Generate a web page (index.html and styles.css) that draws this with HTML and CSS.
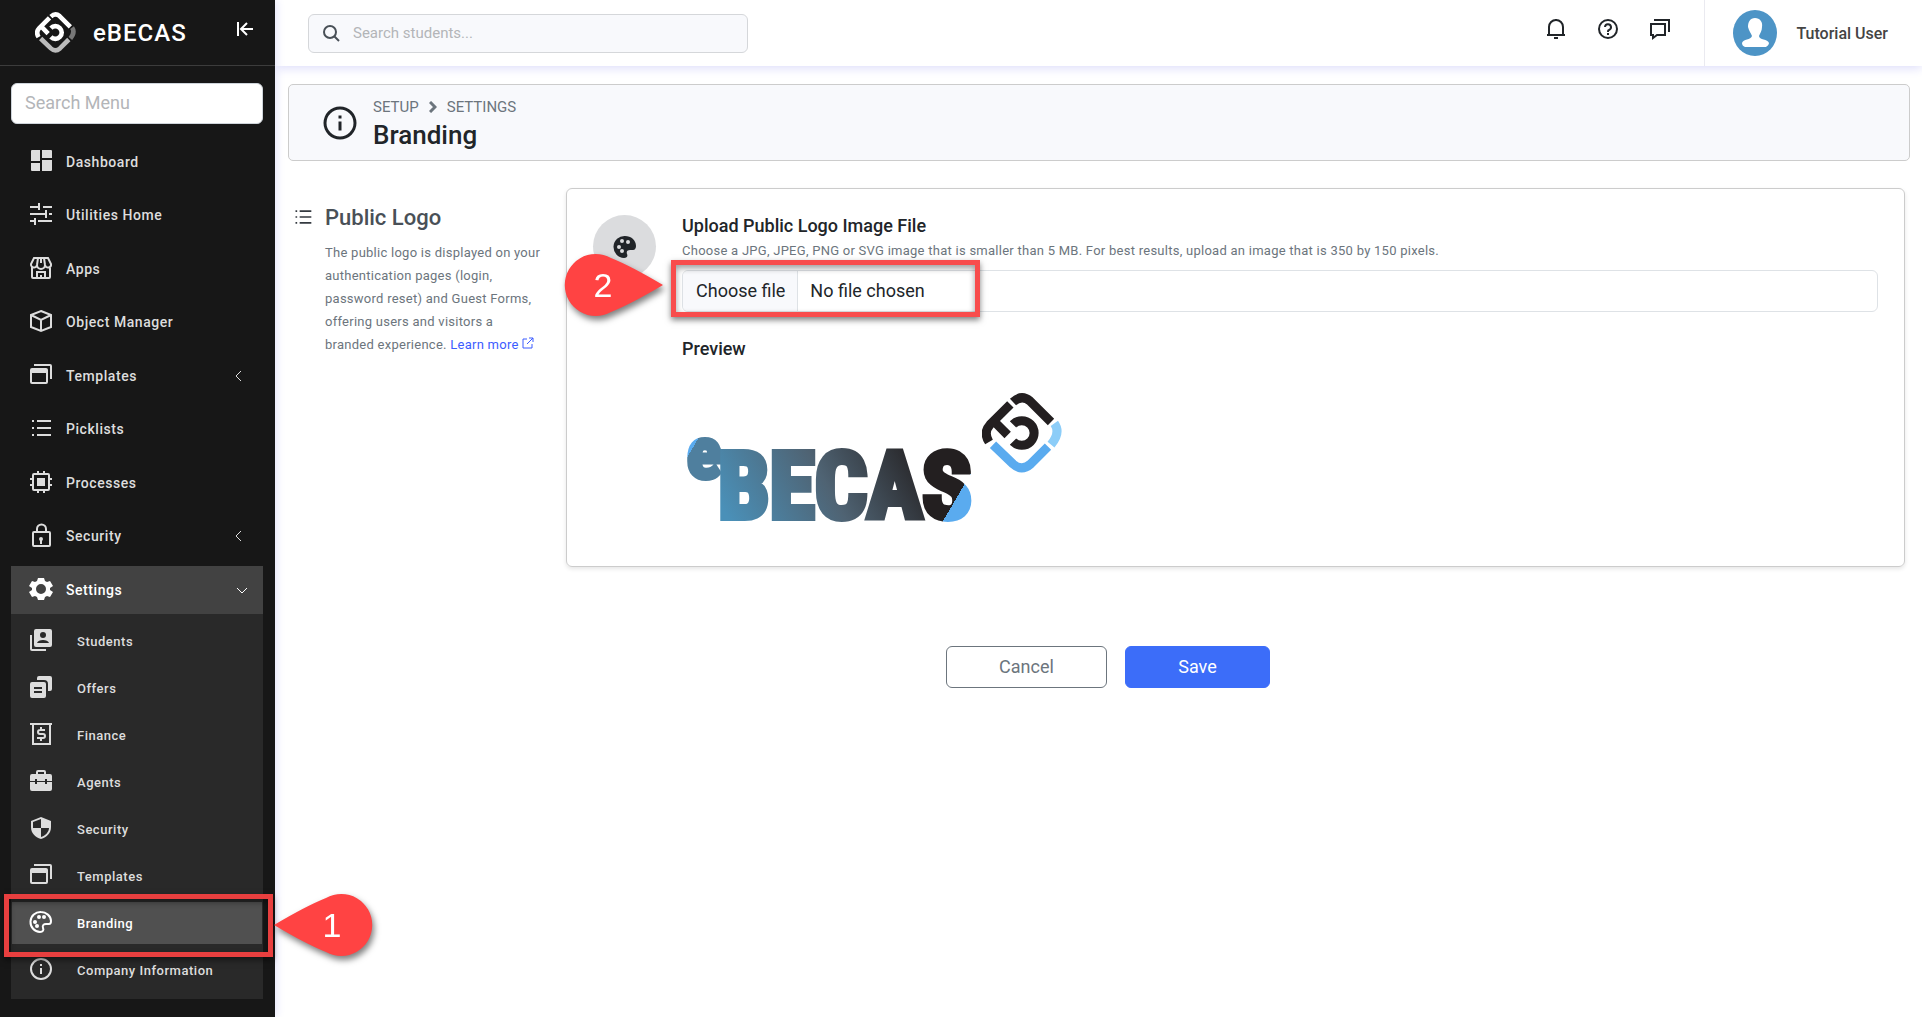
FILE: index.html
```html
<!DOCTYPE html>
<html lang="en">

<head>
    <meta charset="UTF-8">
    <meta name="viewport" content="width=device-width, initial-scale=1.0">
    <title>Branding - eBECAS</title>
    <link rel="stylesheet" href="styles.css">
</head>

<body>
    <!-- shared shapes -->
    <svg class="sprite" aria-hidden="true">
        <symbol id="mark" viewBox="0 0 240 240">
            <g fill="none" stroke-width="27">
                <path class="mark-main" d="M93 27Q119 3 144 24L207 87M85 34L24 95Q3 118 21 147M43 92L77 126M93 94A37 37 0 1 1 93 146" />
                <path class="mark-side" d="M217 91Q237 119 207 155" />
                <path class="mark-base" d="M33 155L93 213Q119 236 146 213L198 161" />
            </g>
        </symbol>
        <symbol id="windows" viewBox="0 0 24 24">
            <path d="M5 1h16a2 2 0 0 1 2 2v13h-2V3H5zM3 5h14a2 2 0 0 1 2 2v12a2 2 0 0 1-2 2H3a2 2 0 0 1-2-2V7a2 2 0 0 1 2-2zm0 5v9h14v-9z" fill-rule="evenodd" />
        </symbol>
        <symbol id="list" viewBox="0 0 24 24">
            <path d="M3 4h2v2H3zm5 0h14v2H8zM3 11h2v2H3zm5 0h14v2H8zM3 18h2v2H3zm5 0h14v2H8z" />
        </symbol>
        <symbol id="info" viewBox="0 0 24 24">
            <path d="M12 1a11 11 0 1 0 0 22 11 11 0 0 0 0-22zm0 2a9 9 0 1 1 0 18 9 9 0 0 1 0-18zm-1 4h2v2h-2zm0 4h2v6h-2z" fill-rule="evenodd" />
        </symbol>
    </svg>

    <aside class="sidebar">
        <div class="brand">
            <svg class="brand-mark"><use href="#mark" /></svg>
            <span class="brand-name">eBECAS</span>
            <button class="collapse" type="button" aria-label="Collapse menu">
                <svg width="18" height="14" viewBox="0 0 18 14" fill="none" stroke="currentColor" stroke-width="2"><path d="M2 0v14M17 7H6M11 1L5 7l6 6" /></svg>
            </button>
        </div>

        <input class="menu-search" type="text" placeholder="Search Menu" aria-label="Search Menu">

        <nav>
            <ul class="nav">
                <li><a class="nav-link" href="#">
                    <svg class="icon" viewBox="0 0 24 24"><path d="M3 1h8v11H2V2a1 1 0 0 1 1-1zm10 0h9a1 1 0 0 1 1 1v7H13zM2 14h9v8H3a1 1 0 0 1-1-1zm11-3h10v10a1 1 0 0 1-1 1h-9z" /></svg>
                    Dashboard</a></li>
                <li><a class="nav-link" href="#">
                    <svg class="icon line" viewBox="0 0 24 24"><path d="M1 5h10M10 1v7M14 5h9M1 12h16M17 8v8M20 12h3M1 19h5M6 16v7M9 19h14" /></svg>
                    Utilities Home</a></li>
                <li><a class="nav-link" href="#">
                    <svg class="icon line" viewBox="0 0 24 24"><path d="M5 2h14l3 6a3 3 0 0 1-6 1 4 4 0 0 1-8 0 3 3 0 0 1-6-1zM3 11v10a1 1 0 0 0 1 1h16a1 1 0 0 0 1-1V11M9 2L8 9M15 2l1 7M12 2v5M8 22v-6h8v6M12 19v3" /></svg>
                    Apps</a></li>
                <li><a class="nav-link" href="#">
                    <svg class="icon line" viewBox="0 0 24 24"><path d="M12 2l10 4v12l-10 4-10-4V6zM2 6l10 5 10-5M12 11v11" /></svg>
                    Object Manager</a></li>
                <li><a class="nav-link" href="#">
                    <svg class="icon"><use href="#windows" /></svg>
                    Templates
                    <svg class="caret" viewBox="0 0 12 12"><path d="M8 1L3 6l5 5" /></svg></a></li>
                <li><a class="nav-link" href="#">
                    <svg class="icon"><use href="#list" /></svg>
                    Picklists</a></li>
                <li><a class="nav-link" href="#">
                    <svg class="icon line" viewBox="0 0 24 24"><path d="M9 1v3M15 1v3M9 20v3M15 20v3M1 9h3M1 15h3M20 9h3M20 15h3" /><rect x="4" y="4" width="16" height="16" rx="1" /><path d="M8 8h8v8H8z" fill="currentColor" stroke="none" /></svg>
                    Processes</a></li>
                <li><a class="nav-link" href="#">
                    <svg class="icon line" viewBox="0 0 24 24"><rect x="4" y="9" width="17" height="14" rx="1" /><path d="M8 9V6a4 4 0 0 1 9 0v3M12 16v5" /><circle cx="12" cy="16" r="1" /></svg>
                    Security
                    <svg class="caret" viewBox="0 0 12 12"><path d="M8 1L3 6l5 5" /></svg></a></li>
                <li class="open"><a class="nav-link" href="#">
                    <svg class="icon" viewBox="0 0 24 24"><path d="M9 1h6l1 3 2 1 3-1 3 5-3 2v2l3 2-3 5-3-1-2 1-1 3H9l-1-3-2-1-3 1-3-5 3-2v-2L0 9l3-5 3 1 2-1zm3 6a5 5 0 1 0 0 10 5 5 0 0 0 0-10z" fill-rule="evenodd" /></svg>
                    Settings
                    <svg class="caret" viewBox="0 0 12 12"><path d="M1 4l5 5 5-5" /></svg></a>
                    <ul class="subnav">
                        <li><a class="sub-link" href="#">
                            <svg class="icon" viewBox="0 0 24 24"><path d="M7 1h14a2 2 0 0 1 2 2v14a2 2 0 0 1-2 2H7a2 2 0 0 1-2-2V3a2 2 0 0 1 2-2zm7 3a3 3 0 1 0 0 6 3 3 0 0 0 0-6zM8 15h12c-1-4-11-4-12 0zM1 7h2v14h14v2H3a2 2 0 0 1-2-2z" fill-rule="evenodd" /></svg>
                            Students</a></li>
                        <li><a class="sub-link" href="#">
                            <svg class="icon" viewBox="0 0 24 24"><path d="M10 1h11a2 2 0 0 1 2 2v11a2 2 0 0 1-2 2h-2V9a4 4 0 0 0-4-4H8V3a2 2 0 0 1 2-2zM3 7h12a2 2 0 0 1 2 2v12a2 2 0 0 1-2 2H3a2 2 0 0 1-2-2V9a2 2 0 0 1 2-2zm2 5v2h8v-2zm0 4v2h8v-2z" fill-rule="evenodd" /></svg>
                            Offers</a></li>
                        <li><a class="sub-link" href="#">
                            <svg class="icon line" viewBox="0 0 24 24"><path d="M1 2h22M4 2v20h17V2M16 8h-5a2 2 0 0 0 0 4h3a2 2 0 0 1 0 4H8M12 5v3M12 16v3" /></svg>
                            Finance</a></li>
                        <li><a class="sub-link" href="#">
                            <svg class="icon" viewBox="0 0 24 24"><path d="M9 1h6a2 2 0 0 1 2 2v2h4a2 2 0 0 1 2 2v5h-5v-2h-2v2H8v-2H6v2H1V7a2 2 0 0 1 2-2h4V3a2 2 0 0 1 2-2zm0 2v2h6V3zM1 13h5v2h2v-2h8v2h2v-2h5v7a2 2 0 0 1-2 2H3a2 2 0 0 1-2-2z" fill-rule="evenodd" /></svg>
                            Agents</a></li>
                        <li><a class="sub-link" href="#">
                            <svg class="icon" viewBox="0 0 24 24"><path d="M12 1l10 4v6c0 6-4 10-10 12C6 21 2 17 2 11V5zm0 2L4 6v6h8zm0 9v9c4-1 8-5 8-9z" fill-rule="evenodd" /></svg>
                            Security</a></li>
                        <li><a class="sub-link" href="#">
                            <svg class="icon"><use href="#windows" /></svg>
                            Templates</a></li>
                        <li class="marked"><a class="sub-link active" href="#">
                            <svg class="icon line" viewBox="0 0 24 24"><path d="M12 2a10 10 0 0 0-1 20c3 0 4-2 3-4-1-3 1-4 3-4h3c1 0 2-1 2-3 0-5-5-9-10-9z" /><g fill="currentColor" stroke="none"><circle cx="6" cy="12" r="2" /><circle cx="10" cy="7" r="2" /><circle cx="15" cy="7" r="2" /><circle cx="8" cy="16" r="2" /></g></svg>
                            Branding</a>
                            <span class="outline outline-branding"></span>
                            <svg class="callout callout-branding" viewBox="0 0 98 62"><path d="M0 31Q32 12 52 4A31 31 0 1 1 52 58Q32 50 0 31z" /><text x="58" y="43">1</text></svg>
                        </li>
                        <li><a class="sub-link" href="#">
                            <svg class="icon"><use href="#info" /></svg>
                            Company Information</a></li>
                    </ul>
                </li>
            </ul>
        </nav>
    </aside>

    <div class="page">
        <header class="topbar">
            <label class="student-search">
                <svg width="18" height="18" viewBox="0 0 18 18" fill="none" stroke="currentColor" stroke-width="2"><circle cx="8" cy="8" r="6" /><path d="M12 12l5 5" /></svg>
                <input type="text" placeholder="Search students..." aria-label="Search students">
            </label>
            <div class="top-actions">
                <button type="button" aria-label="Notifications">
                    <svg width="22" height="22" viewBox="0 0 22 22"><path d="M4 17V9a7 7 0 0 1 14 0v8M2 17h18" /><path d="M9 20h4M11 1v2" /></svg>
                </button>
                <button type="button" aria-label="Help">
                    <svg width="22" height="22" viewBox="0 0 22 22"><circle cx="11" cy="11" r="9" /><path d="M8 9a3 3 0 1 1 4 3c-1 0-1 1-1 2M11 15v2" /></svg>
                </button>
                <button type="button" aria-label="Messages">
                    <svg width="22" height="22" viewBox="0 0 22 22"><path d="M2 6h14v11H8l-4 3v-3H2zM5 2h15v12" /></svg>
                </button>
            </div>
            <a class="user" href="#">
                <svg width="44" height="46" viewBox="0 0 44 46"><ellipse cx="22" cy="23" rx="22" ry="23" fill="#4d94c6" /><path d="M22 8c5 0 8 4 7 9 0 4-2 6-3 9 0 4 9 3 10 7 0 2-2 3-3 4H12c-2-1-3-2-3-4 1-4 9-3 10-7-1-3-3-5-4-9 0-5 2-9 7-9z" fill="#fff" /></svg>
                <span>Tutorial User</span>
            </a>
        </header>

        <main>
            <div class="page-head">
                <svg class="head-icon"><use href="#info" /></svg>
                <div>
                    <div class="crumbs">
                        <span>SETUP</span>
                        <svg width="8" height="12" viewBox="0 0 8 12" fill="none" stroke="currentColor" stroke-width="3"><path d="M1 1l5 5-5 5" /></svg>
                        <span>SETTINGS</span>
                    </div>
                    <h1>Branding</h1>
                </div>
            </div>

            <div class="columns">
                <section class="intro">
                    <svg class="intro-icon"><use href="#list" /></svg>
                    <div>
                        <h2>Public Logo</h2>
                        <p>The public logo is displayed on your authentication pages (login, password reset) and Guest Forms, offering users and visitors a branded experience. <a href="#">Learn more
                            <svg width="12" height="12" viewBox="0 0 12 12" fill="none" stroke="currentColor"><path d="M5 2H1v9h9V7M7 1h4v4M11 1L5 7" /></svg></a></p>
                    </div>
                </section>

                <section class="card">
                    <div class="card-icon">
                        <svg width="24" height="24" viewBox="0 0 24 24"><path d="M12 1a11 11 0 0 0-1 22c3 0 4-2 3-4-1-3 1-4 3-4h3c2 0 3-2 3-4 0-6-5-10-11-10zM6 10a2 2 0 1 1 0 4 2 2 0 0 1 0-4zm3-6a2 2 0 1 1 0 4 2 2 0 0 1 0-4zm6 1a2 2 0 1 1 0 4 2 2 0 0 1 0-4zm-8 11a2 2 0 1 1 4 0 2 2 0 0 1-4 0z" fill="#212529" fill-rule="evenodd" /></svg>
                    </div>
                    <div class="card-body">
                        <h3>Upload Public Logo Image File</h3>
                        <p class="hint">Choose a JPG, JPEG, PNG or SVG image that is smaller than 5 MB. For best results, upload an image that is 350 by 150 pixels.</p>
                        <label class="file" for="logo-file">
                            <input type="file" id="logo-file" accept=".jpg,.jpeg,.png,.svg">
                            <span class="file-button">Choose file</span>
                            <span class="file-name">No file chosen</span>
                            <span class="outline outline-file"></span>
                            <svg class="callout callout-file" viewBox="0 0 98 62"><path d="M98 31Q66 12 46 4A31 31 0 1 0 46 58Q66 50 98 31z" /><text x="38" y="43">2</text></svg>
                        </label>
                        <h3>Preview</h3>
                        <svg class="preview" viewBox="0 0 390 160">
                            <defs>
                                <linearGradient id="word" gradientUnits="userSpaceOnUse" x1="50" y1="150" x2="230" y2="50">
                                    <stop offset="0" stop-color="#4a90b8" />
                                    <stop offset=".5" stop-color="#4f6373" />
                                    <stop offset="1" stop-color="#231f20" />
                                </linearGradient>
                                <linearGradient id="word-start" gradientUnits="userSpaceOnUse" x1="4" y1="60" x2="38" y2="80">
                                    <stop offset=".3" stop-color="#5aabef" />
                                    <stop offset=".3" stop-color="#4f7f9e" />
                                </linearGradient>
                                <linearGradient id="word-end" gradientUnits="userSpaceOnUse" x1="240" y1="107" x2="286" y2="134">
                                    <stop offset=".7" stop-color="#231f20" />
                                    <stop offset=".7" stop-color="#5aabef" />
                                </linearGradient>
                            </defs>
                            <text class="word-small" x="5" y="102" fill="url(#word-start)" stroke="url(#word-start)">e</text>
                            <text class="word" x="36" y="142" fill="url(#word)" stroke="url(#word)">BECA<tspan fill="url(#word-end)" stroke="url(#word-end)">S</tspan></text>
                            <use href="#mark" x="300" y="17" width="80" height="80" />
                        </svg>
                    </div>
                </section>
            </div>

            <div class="form-actions">
                <button class="btn btn-cancel" type="button">Cancel</button>
                <button class="btn btn-save" type="submit">Save</button>
            </div>
        </main>
    </div>
</body>

</html>
```
FILE: styles.css
```css
* {
    box-sizing: border-box;
}

body {
    margin: 0;
    display: flex;
    min-height: 100vh;
    font-family: Roboto, "Liberation Sans", sans-serif;
    color: #212529;
    background: #fff;
}

h1,
h2,
h3,
p,
ul {
    margin: 0;
    padding: 0;
    font-weight: 500;
}

ul {
    list-style: none;
}

a {
    color: #3c5cff;
    text-decoration: none;
}

button,
input {
    font-family: inherit;
}

.sprite {
    position: absolute;
    width: 0;
    height: 0;
}

.mark-main {
    stroke: var(--mark-main, #231f20);
}

.mark-side {
    stroke: var(--mark-side, #8ccdf8);
}

.mark-base {
    stroke: var(--mark-base, #5aabef);
}

/* sidebar */
.sidebar {
    position: relative;
    z-index: 2;
    flex: 0 0 275px;
    background: #171717;
    box-shadow: 0 0 10px #dcdcfa;
}

.brand {
    display: flex;
    align-items: center;
    height: 66px;
    padding: 0 21px 0 35px;
    border-bottom: 1px solid #3c3c3c;
}

.brand-mark {
    --mark-main: #fff;
    --mark-side: #777;
    --mark-base: #bbb;
    width: 41px;
    height: 41px;
}

.brand-name {
    flex: 1;
    padding-left: 17px;
    color: #fff;
    font-size: 24px;
    font-weight: 500;
    letter-spacing: 1px;
}

.collapse {
    padding: 0;
    border: 0;
    margin-bottom: 5px;
    background: none;
    color: #fff;
    cursor: pointer;
}

.menu-search {
    display: block;
    width: 252px;
    height: 41px;
    margin: 17px 11px 14px;
    padding: 0 13px 2px;
    border: 1px solid #ced4da;
    border-radius: 6px;
    font-size: 18px;
}

::placeholder {
    color: #b3b5b8;
    opacity: 1;
}

.nav {
    display: flex;
    flex-direction: column;
    gap: 5px;
    margin: 0 12px 0 11px;
}

.nav > li:nth-child(even) {
    margin-bottom: 1px;
}

.nav-link,
.sub-link {
    display: flex;
    align-items: center;
    padding: 0 18px;
    color: #ddd;
    font-weight: 500;
    letter-spacing: .04em;
}

.nav-link {
    height: 48px;
    gap: 13px;
    font-size: 14px;
}

.sub-link {
    height: 42px;
    gap: 24px;
    font-size: 13px;
}

.icon {
    width: 24px;
    height: 24px;
    margin-bottom: 2px;
    fill: currentColor;
}

.line {
    fill: none;
    stroke: currentColor;
    stroke-width: 2;
}

.caret {
    width: 12px;
    height: 12px;
    margin-left: auto;
    fill: none;
    stroke: currentColor;
}

.open > .nav-link {
    padding-right: 15px;
    background: #424242;
    color: #fff;
}

.subnav {
    display: flex;
    flex-direction: column;
    gap: 5px;
    padding: 6px 1px 8px;
    background: #292929;
}

.subnav .sub-link {
    padding-left: 17px;
}

.marked {
    position: relative;
}

.sub-link.active {
    background: #505050;
    color: #fff;
}

/* numbered markers */
.outline {
    position: absolute;
    border: 5px solid #f84c4c;
    box-shadow: 0 3px 6px rgba(0, 0, 0, .5), inset 0 3px 6px rgba(0, 0, 0, .4);
    pointer-events: none;
}

.outline-branding {
    inset: -8px -11px -13px -8px;
    border-color: #e83f3f;
}

.callout {
    position: absolute;
    width: 98px;
    height: 62px;
    overflow: visible;
    filter: drop-shadow(2px 4px 3px rgba(0, 0, 0, .5));
    pointer-events: none;
}

.callout path {
    fill: #ff4343;
}

.callout text {
    fill: #fff;
    font-family: "Liberation Sans", Arial, sans-serif;
    font-size: 34px;
    text-anchor: middle;
}

.callout-branding {
    top: -8px;
    left: 262px;
}

/* top bar */
.page {
    flex: 1;
    min-width: 0;
}

.topbar {
    display: flex;
    align-items: center;
    height: 66px;
    padding-left: 33px;
    box-shadow: 0 2px 10px #dcdcfa;
}

.student-search {
    display: flex;
    align-items: center;
    gap: 13px;
    width: 440px;
    height: 39px;
    padding: 0 13px;
    border: 1px solid #d5d7da;
    border-radius: 6px;
    background: #f8f9fc;
    color: #495057;
}

.student-search input {
    flex: 1;
    padding: 0;
    border: 0;
    outline: 0;
    background: none;
    font-size: 15px;
}

.top-actions {
    display: flex;
    gap: 30px;
    margin: 0 33px 8px auto;
}

.top-actions button {
    height: 22px;
    padding: 0;
    border: 0;
    background: none;
    cursor: pointer;
}

.top-actions svg {
    display: block;
    fill: none;
    stroke: #212529;
    stroke-width: 2;
}

.user {
    display: flex;
    align-items: center;
    gap: 19px;
    height: 66px;
    padding: 0 34px 0 28px;
    border-left: 1px solid #eaeaf0;
    color: #444;
    font-size: 16px;
    font-weight: 500;
}

/* content */
main {
    padding: 18px 12px 0 13px;
}

.page-head {
    display: flex;
    align-items: center;
    gap: 15px;
    height: 77px;
    padding-left: 33px;
    border: 1px solid #ccc;
    border-radius: 5px;
    background: #f8f9fc;
}

.head-icon {
    width: 36px;
    height: 36px;
    fill: #212529;
}

.crumbs {
    display: flex;
    align-items: center;
    gap: 10px;
    padding-top: 2px;
    color: #6c757d;
    font-size: 15px;
    line-height: 22px;
}

h1 {
    font-size: 26px;
    line-height: 34px;
}

.columns {
    display: grid;
    grid-template-columns: 230px 1fr;
    column-gap: 43px;
    padding: 27px 5px 0;
}

.intro {
    display: flex;
    gap: 12px;
    padding-top: 15px;
}

.intro-icon {
    flex: 0 0 20px;
    height: 20px;
    margin-top: 4px;
    fill: #343a40;
}

h2 {
    color: #495057;
    font-size: 22px;
    line-height: 30px;
}

.intro p {
    width: 216px;
    margin-top: 8px;
    color: #6c757d;
    font-size: 13px;
    font-weight: 400;
    line-height: 23px;
    letter-spacing: .02em;
}

.card {
    display: flex;
    gap: 26px;
    padding: 26px;
    border: 1px solid #ccc;
    border-radius: 6px;
    box-shadow: 0 2px 4px rgba(0, 0, 0, .1);
}

.card-icon {
    display: flex;
    flex: 0 0 63px;
    align-items: center;
    justify-content: center;
    height: 63px;
    border-radius: 50%;
    background: #dbdcde;
}

.card-body {
    flex: 1;
}

h3 {
    font-size: 18px;
    line-height: 22px;
}

.hint {
    color: #6c757d;
    font-size: 13px;
    font-weight: 400;
    line-height: 20px;
    letter-spacing: .02em;
    margin: 4px 0 9px;
}

.file {
    position: relative;
    display: flex;
    align-items: center;
    height: 42px;
    margin-bottom: 26px;
    border: 1px solid #dee2e6;
    border-radius: 6px;
    font-size: 18px;
}

.file input {
    position: absolute;
    inset: 0;
    width: 100%;
    opacity: 0;
    cursor: pointer;
}

.file-button {
    padding: 0 12px 0 13px;
    border-right: 1px solid #dee2e6;
    border-radius: 5px 0 0 5px;
    background: #f8f9fc;
    line-height: 40px;
}

.file-name {
    padding-left: 12px;
    line-height: 40px;
}

.outline-file {
    top: -11px;
    left: -12px;
    width: 309px;
    height: 57px;
}

.callout-file {
    top: -17px;
    left: -118px;
}

.preview {
    display: block;
    width: 390px;
    height: 160px;
    margin: 16px 0 4px;
    overflow: visible;
}

.word,
.word-small {
    font-family: "Roboto Condensed", "Liberation Sans Narrow", Roboto, sans-serif;
    font-weight: 700;
}

.word {
    font-size: 92px;
    stroke-width: 6;
}

.word-small {
    font-size: 72px;
    stroke-width: 5;
}

.form-actions {
    display: flex;
    justify-content: center;
    gap: 18px;
    padding: 79px 0 0 18px;
}

.btn {
    width: 145px;
    height: 42px;
    padding: 0 0 1px;
    border: 1px solid #3c6df9;
    border-radius: 6px;
    font-size: 18px;
    cursor: pointer;
}

.btn-cancel {
    width: 161px;
    border-color: #6c757d;
    background: #fff;
    color: #6c757d;
}

.btn-save {
    background: #3c6df9;
    color: #fff;
}
```
